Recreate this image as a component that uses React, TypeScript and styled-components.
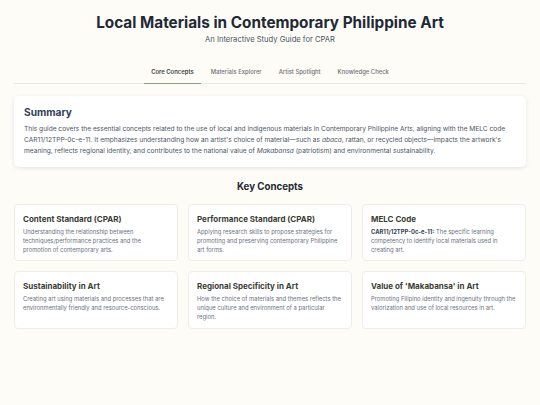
import React from "react";
import styled, { createGlobalStyle } from "styled-components";

const GlobalStyle = createGlobalStyle`
  * { box-sizing: border-box; }
  body {
    margin: 0;
    background: #fdfcf6;
    font-family: Inter, "Noto Sans", sans-serif;
    color: #374151;
  }
`;

const Page = styled.div`
  width: 512px;
  margin: 0 auto;
  padding: 13px 0 20px;
`;

const Header = styled.header`
  text-align: center;
`;

const Title = styled.h1`
  margin: 0;
  font-size: 15.3px;
  line-height: 20px;
  font-weight: 700;
  color: #1f2937;
`;

const Subtitle = styled.p`
  margin: 2px 0 0;
  font-size: 7.6px;
  line-height: 10px;
  color: #4b5563;
`;

const Tabs = styled.nav`
  display: flex;
  justify-content: center;
  gap: 3px;
  margin-top: 17px;
  border-bottom: 1px solid #e9e7e1;
`;

const Tab = styled.button<{ $active?: boolean }>`
  background: none;
  border: none;
  font-family: inherit;
  font-size: 5.9px;
  line-height: 8px;
  font-weight: ${(p) => (p.$active ? 600 : 500)};
  color: ${(p) => (p.$active ? "#3f3f46" : "#71717a")};
  padding: 6px 7px 7px;
  margin-bottom: -1px;
  border-bottom: 1px solid ${(p) => (p.$active ? "#8ca38a" : "transparent")};
  cursor: pointer;
`;

const SummaryCard = styled.section`
  margin-top: 12px;
  background: #fff;
  border-radius: 5px;
  box-shadow: 0 1px 4px rgba(0, 0, 0, 0.1);
  padding: 9px 10px 10px;
`;

const SummaryHeading = styled.h2`
  margin: 0 0 5px;
  font-size: 10.2px;
  line-height: 14px;
  font-weight: 700;
  color: #334155;
`;

const SummaryText = styled.p`
  margin: 0;
  font-size: 6.6px;
  line-height: 11px;
  color: #4b5563;
`;

const SectionHeading = styled.h2`
  margin: 13px 0 10px;
  text-align: center;
  font-size: 9.7px;
  line-height: 14px;
  font-weight: 700;
  color: #1f2937;
`;

const Grid = styled.div`
  display: grid;
  grid-template-columns: repeat(3, 1fr);
  gap: 10px;
`;

const Card = styled.div`
  background: #fff;
  border: 1px solid #eeede8;
  border-radius: 4px;
  padding: 8px 8px 6px;
  min-height: 57px;
`;

const CardTitle = styled.h3`
  margin: 0 0 3px;
  font-size: 8px;
  line-height: 12px;
  font-weight: 700;
  color: #3a3d33;
`;

const CardText = styled.p`
  margin: 0;
  font-size: 5.85px;
  line-height: 8.8px;
  color: #6b7280;
  strong { color: #374151; font-weight: 700; }
`;

const concepts: { title: string; body: React.ReactNode }[] = [
  {
    title: "Content Standard (CPAR)",
    body: "Understanding the relationship between techniques/performance practices and the promotion of contemporary arts.",
  },
  {
    title: "Performance Standard (CPAR)",
    body: "Applying research skills to propose strategies for promoting and preserving contemporary Philippine art forms.",
  },
  {
    title: "MELC Code",
    body: (
      <>
        <strong>CAR11/12TPP-0c-e-11:</strong> The specific learning competency to identify local materials used in creating art.
      </>
    ),
  },
  {
    title: "Sustainability in Art",
    body: "Creating art using materials and processes that are environmentally friendly and resource-conscious.",
  },
  {
    title: "Regional Specificity in Art",
    body: "How the choice of materials and themes reflects the unique culture and environment of a particular region.",
  },
  {
    title: "Value of 'Makabansa' in Art",
    body: "Promoting Filipino identity and ingenuity through the valorization and use of local resources in art.",
  },
];

const tabs = ["Core Concepts", "Materials Explorer", "Artist Spotlight", "Knowledge Check"];

export default function App() {
  return (
    <>
      <GlobalStyle />
      <Page>
        <Header>
          <Title>Local Materials in Contemporary Philippine Art</Title>
          <Subtitle>An Interactive Study Guide for CPAR</Subtitle>
        </Header>
        <Tabs>
          {tabs.map((t, i) => (
            <Tab key={t} $active={i === 0}>
              {t}
            </Tab>
          ))}
        </Tabs>
        <SummaryCard>
          <SummaryHeading>Summary</SummaryHeading>
          <SummaryText>
            This guide covers the essential concepts related to the use of local and indigenous materials in Contemporary
            Philippine Arts, aligning with the MELC code CAR11/12TPP-0c-e-11. It emphasizes understanding how an artist's
            choice of material—such as <em>abaca</em>, rattan, or recycled objects—impacts the artwork's meaning, reflects
            regional identity, and contributes to the national value of <em>Makabansa</em> (patriotism) and environmental
            sustainability.
          </SummaryText>
        </SummaryCard>
        <SectionHeading>Key Concepts</SectionHeading>
        <Grid>
          {concepts.map((c) => (
            <Card key={c.title}>
              <CardTitle>{c.title}</CardTitle>
              <CardText>{c.body}</CardText>
            </Card>
          ))}
        </Grid>
      </Page>
    </>
  );
}
